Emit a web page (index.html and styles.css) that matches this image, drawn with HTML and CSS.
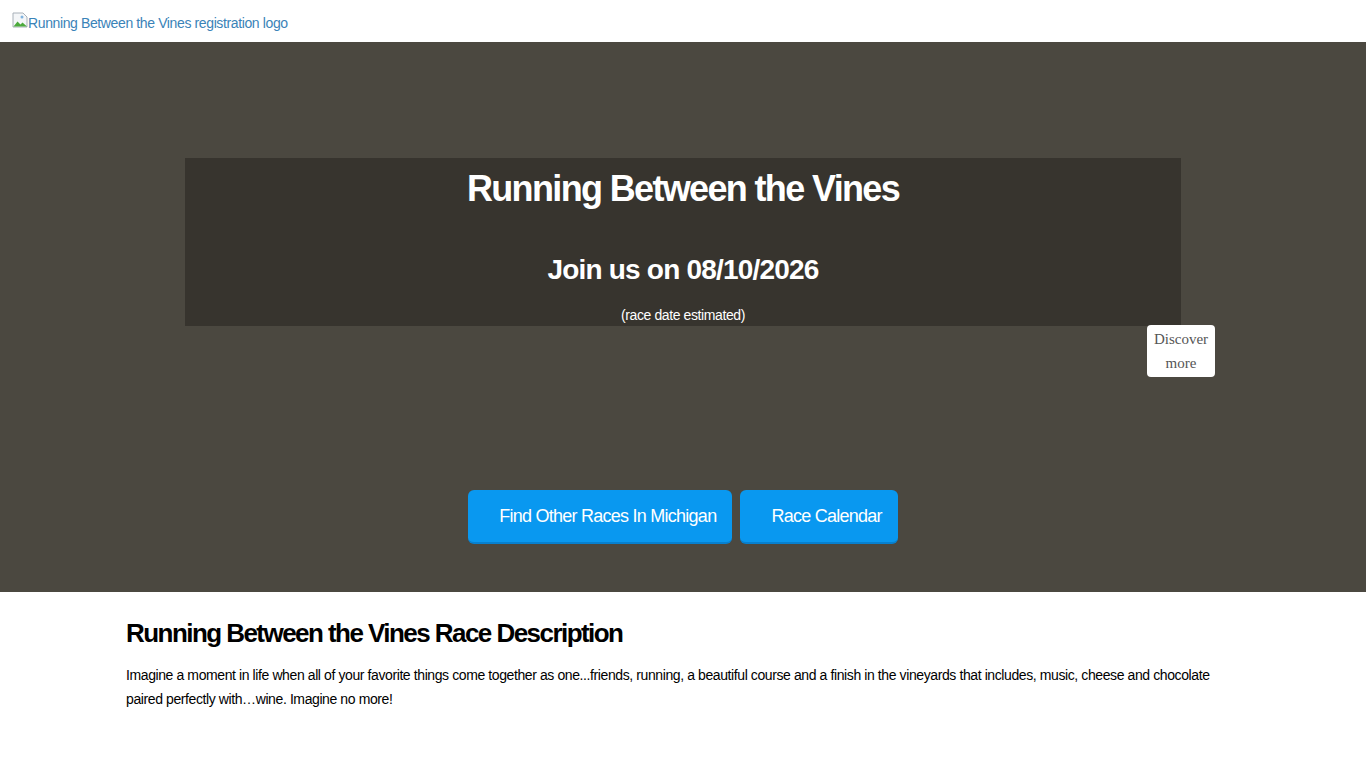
FILE: index.html
```html
<!DOCTYPE html>
<html lang="en">
<head>
  <meta charset="UTF-8">
  <meta name="viewport" content="width=device-width, initial-scale=1.0">
  <title>Running Between the Vines</title>
  <link rel="stylesheet" href="styles.css">
</head>
<body>
  <header class="topbar">
    <a href="#" class="logo">
      <svg class="broken" width="16" height="16" viewBox="0 0 16 16">
        <path d="M1 1h10l4 4v10H1z" fill="#f4f6f8" stroke="#a8b0b8"/>
        <path d="M1.5 14.5l4-5 3 3 2-2 4.5 4z" fill="#4caa3c"/>
        <circle cx="10" cy="5" r="1.5" fill="#7fb3e0"/>
      </svg>Running Between the Vines registration logo
    </a>
  </header>

  <section class="hero">
    <div class="banner">
      <h1>Running Between the Vines</h1>
      <h2>Join us on 08/10/2026</h2>
      <p class="note">(race date estimated)</p>
      <div class="discover">Discover<br>more</div>
    </div>
    <div class="actions">
      <a href="#" class="btn">Find Other Races In Michigan</a>
      <a href="#" class="btn">Race Calendar</a>
    </div>
  </section>

  <main class="content">
    <h2>Running Between the Vines Race Description</h2>
    <p>Imagine a moment in life when all of your favorite things come together as one...friends, running, a beautiful course and a finish in the vineyards that includes, music, cheese and chocolate paired perfectly with…wine. Imagine no more!</p>
  </main>
</body>
</html>
```

FILE: styles.css
```css
body { margin: 0; font-family: "Liberation Sans", Arial, sans-serif; background: #fff; color: #000; }
.topbar { height: 42px; display: flex; align-items: center; padding: 0 12px; background: #fff; }
.logo { color: #3a83b8; text-decoration: none; font-size: 14px; letter-spacing: -0.38px; display: flex; align-items: center; margin-top: 3px; }
.logo .broken { position: relative; top: -3px; }
.hero { background: #4b4840; height: 550px; display: flex; flex-direction: column; align-items: center; }
.banner { position: relative; margin-top: 116px; width: 996px; height: 168px; background: #37342e; color: #fff; text-align: center; }
.banner h1 { margin: 10px 0 0; font-size: 36px; line-height: 42px; font-weight: bold; letter-spacing: -1.65px; }
.banner h2 { margin: 44px 0 0; font-size: 28px; line-height: 32px; font-weight: bold; letter-spacing: -0.8px; }
.note { margin: 21px 0 0; font-size: 14px; line-height: 16px; letter-spacing: -0.4px; }
.discover { position: absolute; left: 962px; top: 167px; width: 68px; height: 52px; background: #fff; border-radius: 4px; color: #555; font-family: "Liberation Serif", "Times New Roman", serif; font-size: 15px; line-height: 24px; text-align: center; padding-top: 2px; box-sizing: border-box; }
.actions { display: flex; gap: 8px; margin-top: 164px; }
.btn { display: block; background: #0998f0; color: #fff; text-decoration: none; font-size: 18px; line-height: 52px; letter-spacing: -0.75px; padding: 0 16px 0 31px; border-radius: 6px; border-bottom: 2px solid #0780cf; }
.content { padding: 0 126px; }
.content h2 { margin: 26px 0 0; font-size: 26px; line-height: 30px; letter-spacing: -1.55px; }
.content p { margin: 15px 0 0; font-size: 14px; line-height: 24px; letter-spacing: -0.4px; }
```
